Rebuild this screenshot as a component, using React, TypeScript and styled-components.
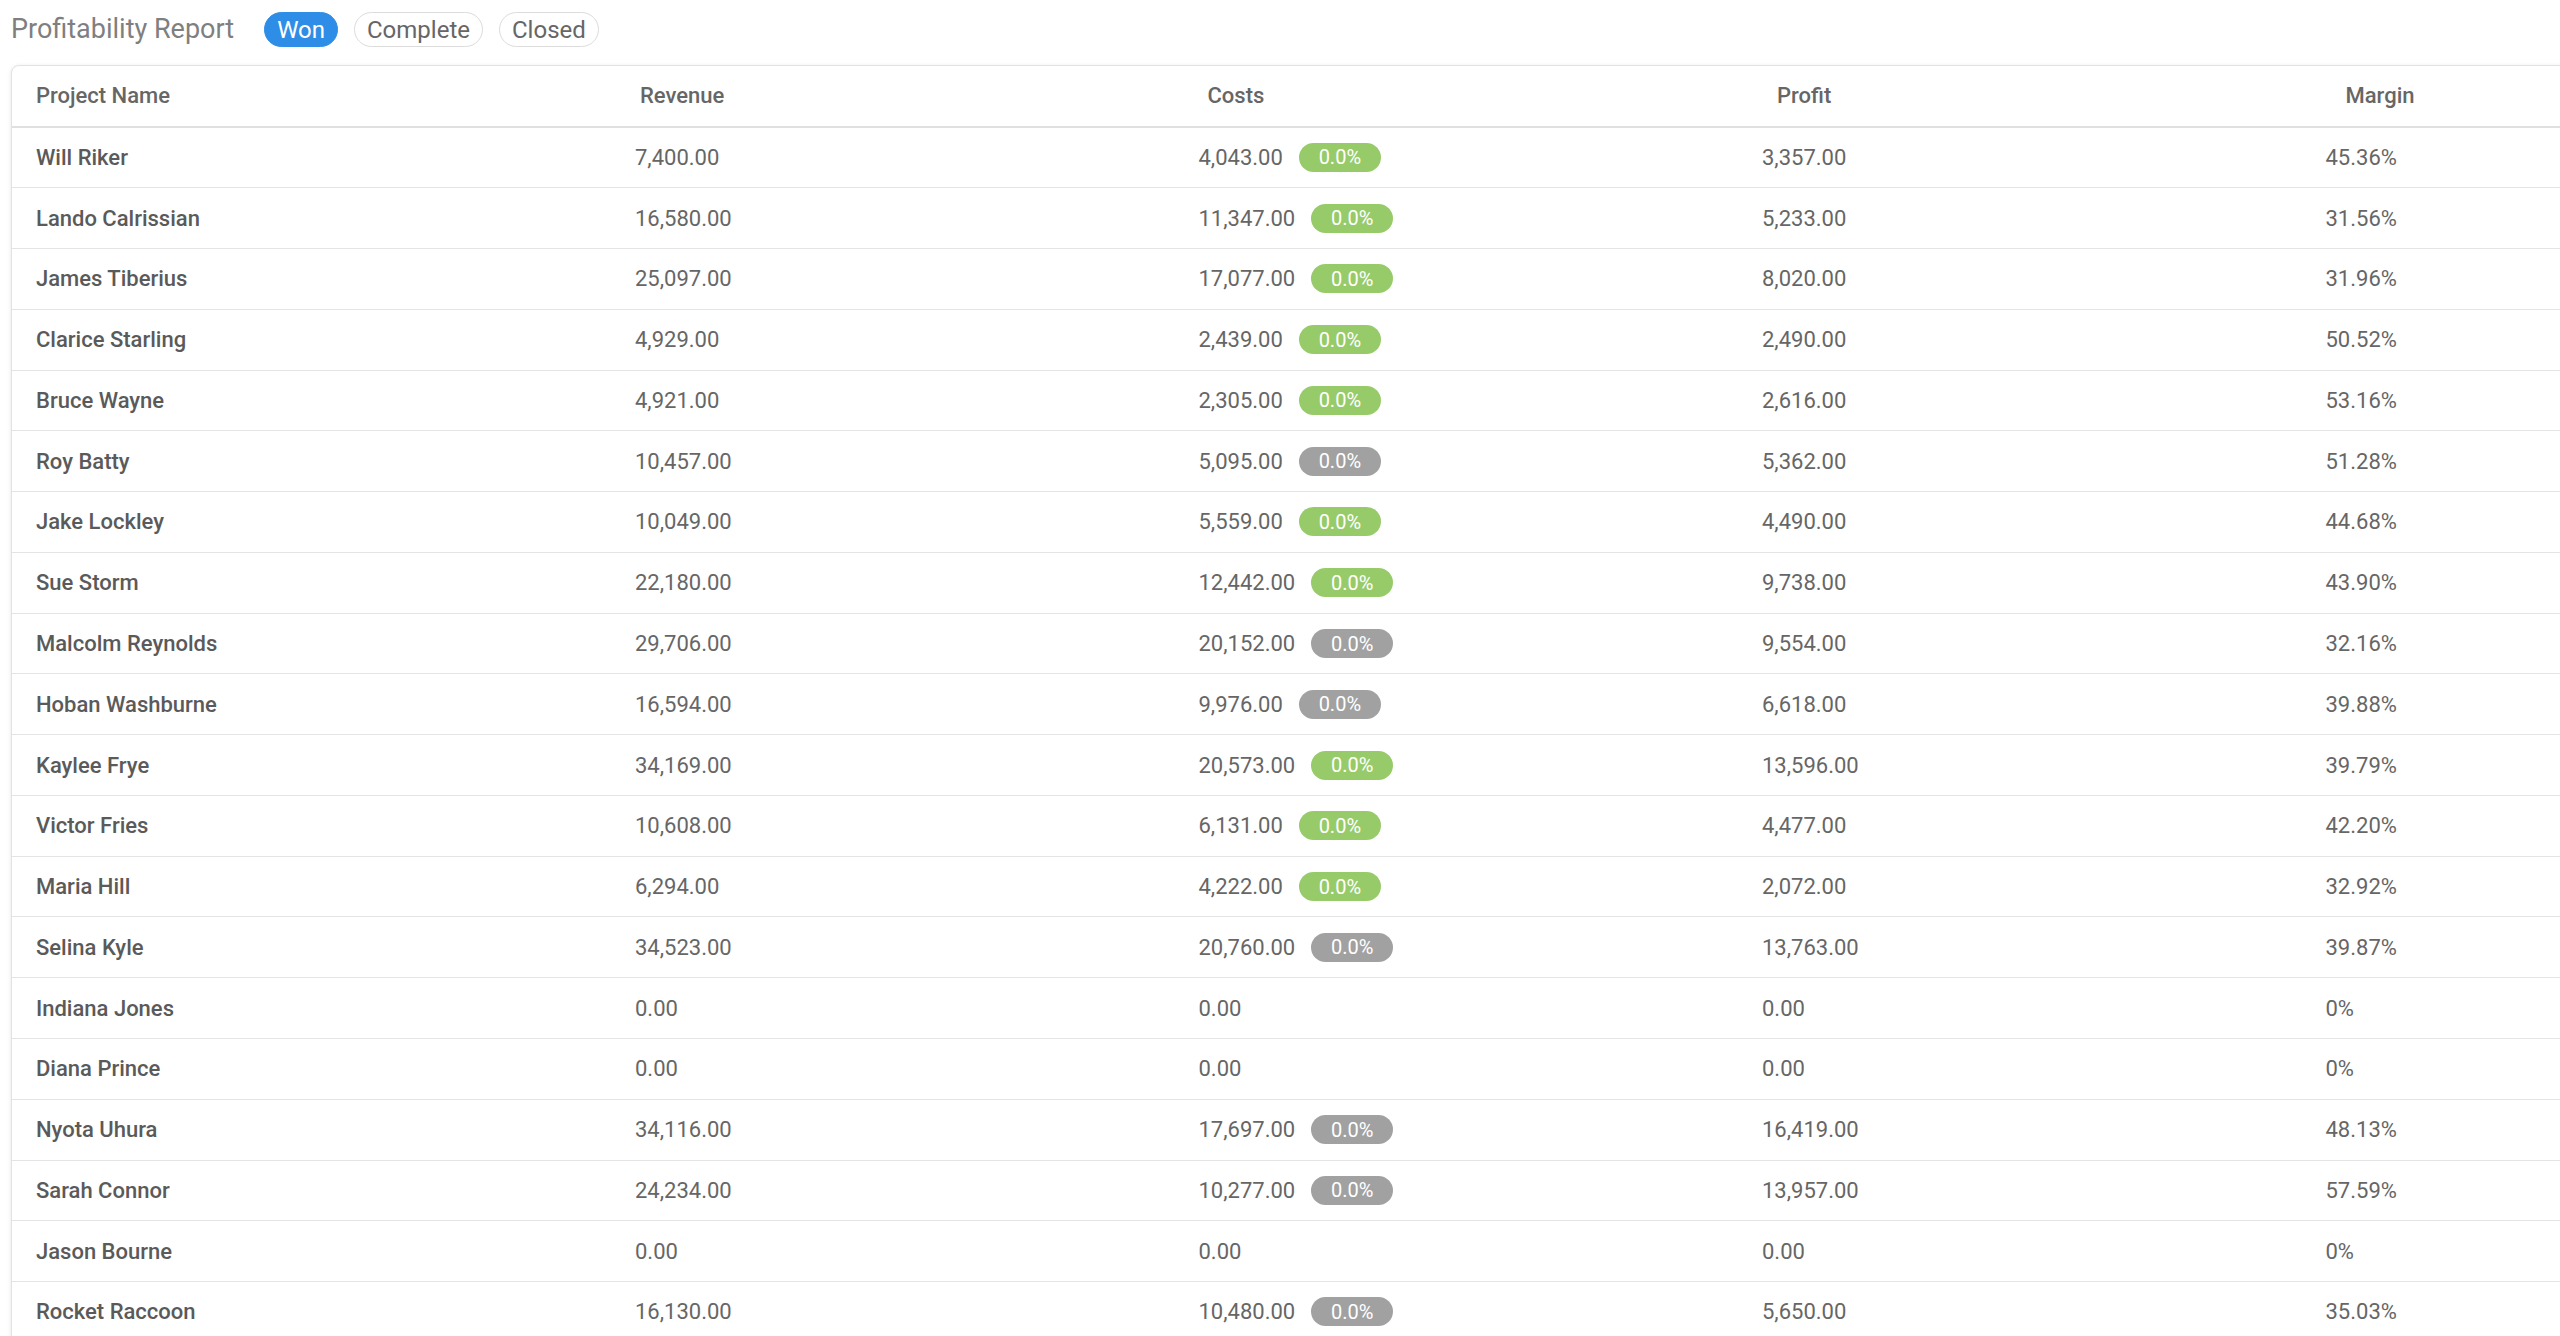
import styled, { createGlobalStyle } from 'styled-components';

type Row = {
  name: string;
  revenue: string;
  costs: string;
  status?: 'good' | 'idle';
  profit: string;
  margin: string;
};

const rows: Row[] = [
  { name: 'Will Riker', revenue: '7,400.00', costs: '4,043.00', status: 'good', profit: '3,357.00', margin: '45.36%' },
  { name: 'Lando Calrissian', revenue: '16,580.00', costs: '11,347.00', status: 'good', profit: '5,233.00', margin: '31.56%' },
  { name: 'James Tiberius', revenue: '25,097.00', costs: '17,077.00', status: 'good', profit: '8,020.00', margin: '31.96%' },
  { name: 'Clarice Starling', revenue: '4,929.00', costs: '2,439.00', status: 'good', profit: '2,490.00', margin: '50.52%' },
  { name: 'Bruce Wayne', revenue: '4,921.00', costs: '2,305.00', status: 'good', profit: '2,616.00', margin: '53.16%' },
  { name: 'Roy Batty', revenue: '10,457.00', costs: '5,095.00', status: 'idle', profit: '5,362.00', margin: '51.28%' },
  { name: 'Jake Lockley', revenue: '10,049.00', costs: '5,559.00', status: 'good', profit: '4,490.00', margin: '44.68%' },
  { name: 'Sue Storm', revenue: '22,180.00', costs: '12,442.00', status: 'good', profit: '9,738.00', margin: '43.90%' },
  { name: 'Malcolm Reynolds', revenue: '29,706.00', costs: '20,152.00', status: 'idle', profit: '9,554.00', margin: '32.16%' },
  { name: 'Hoban Washburne', revenue: '16,594.00', costs: '9,976.00', status: 'idle', profit: '6,618.00', margin: '39.88%' },
  { name: 'Kaylee Frye', revenue: '34,169.00', costs: '20,573.00', status: 'good', profit: '13,596.00', margin: '39.79%' },
  { name: 'Victor Fries', revenue: '10,608.00', costs: '6,131.00', status: 'good', profit: '4,477.00', margin: '42.20%' },
  { name: 'Maria Hill', revenue: '6,294.00', costs: '4,222.00', status: 'good', profit: '2,072.00', margin: '32.92%' },
  { name: 'Selina Kyle', revenue: '34,523.00', costs: '20,760.00', status: 'idle', profit: '13,763.00', margin: '39.87%' },
  { name: 'Indiana Jones', revenue: '0.00', costs: '0.00', profit: '0.00', margin: '0%' },
  { name: 'Diana Prince', revenue: '0.00', costs: '0.00', profit: '0.00', margin: '0%' },
  { name: 'Nyota Uhura', revenue: '34,116.00', costs: '17,697.00', status: 'idle', profit: '16,419.00', margin: '48.13%' },
  { name: 'Sarah Connor', revenue: '24,234.00', costs: '10,277.00', status: 'idle', profit: '13,957.00', margin: '57.59%' },
  { name: 'Jason Bourne', revenue: '0.00', costs: '0.00', profit: '0.00', margin: '0%' },
  { name: 'Rocket Raccoon', revenue: '16,130.00', costs: '10,480.00', status: 'idle', profit: '5,650.00', margin: '35.03%' },
];

const filters = ['Won', 'Complete', 'Closed'];

const App = () => {
  return (
    <Page>
      <GlobalStyle />
      <TitleBar>
        <Title>Profitability Report</Title>
        <Filters>
          {filters.map((f) => (
            <FilterPill key={f} $active={f === 'Won'}>{f}</FilterPill>
          ))}
        </Filters>
      </TitleBar>
      <Table>
        <HeaderRow>
          <HeadCell $indent={0}>Project Name</HeadCell>
          <HeadCell $indent={5}>Revenue</HeadCell>
          <HeadCell $indent={9}>Costs</HeadCell>
          <HeadCell $indent={15}>Profit</HeadCell>
          <HeadCell $indent={20}>Margin</HeadCell>
        </HeaderRow>
        {rows.map((r) => (
          <BodyRow key={r.name}>
            <NameCell>{r.name}</NameCell>
            <Cell>{r.revenue}</Cell>
            <Cell>
              {r.costs}
              {r.status && <Badge $status={r.status}>0.0%</Badge>}
            </Cell>
            <Cell>{r.profit}</Cell>
            <Cell>{r.margin}</Cell>
          </BodyRow>
        ))}
      </Table>
    </Page>
  );
};

const GlobalStyle = createGlobalStyle`
  html, body {
    margin: 0;
    padding: 0;
    background: #ffffff;
    overflow: hidden;
  }
  body {
    font-family: Roboto, "Liberation Sans", sans-serif;
  }
`;

const Page = styled.div`
  padding: 12px 0 0 11px;
  width: 2560px;
  height: 1336px;
  box-sizing: border-box;
  overflow: hidden;
`;

const TitleBar = styled.div`
  display: flex;
  align-items: center;
  gap: 30px;
  height: 35px;
`;

const Title = styled.h1`
  margin: 0;
  font-size: 27px;
  font-weight: 400;
  color: #7f7f7f;
  line-height: 1;
`;

const Filters = styled.div`
  display: flex;
  gap: 16px;
`;

const FilterPill = styled.button<{ $active?: boolean }>`
  height: 35px;
  padding: 0 12px;
  border-radius: 18px;
  font-family: Roboto, "Liberation Sans", sans-serif;
  font-size: 24px;
  line-height: 1;
  border: 1px solid ${(p) => (p.$active ? '#2e8de6' : '#dcdcdc')};
  background: ${(p) => (p.$active ? '#2e8de6' : '#ffffff')};
  color: ${(p) => (p.$active ? '#ffffff' : '#666666')};
  cursor: pointer;
`;

const Table = styled.div`
  margin-top: 18px;
  width: 2853px;
  border: 1px solid #e2e2e2;
  border-radius: 8px 0 0 0;
  box-shadow: 0 1px 4px rgba(0, 0, 0, 0.1);
  background: #fff;
`;

const columns = '599px repeat(4, 563.5px)';

const HeaderRow = styled.div`
  display: grid;
  grid-template-columns: ${columns};
  height: 61.5px;
  box-sizing: border-box;
  align-items: center;
  border-bottom: 2px solid #e0e0e0;
`;

const HeadCell = styled.div<{ $indent: number }>`
  padding-left: ${(p) => 24 + p.$indent}px;
  font-size: 22px;
  font-weight: 500;
  color: #666666;
`;

const BodyRow = styled.div`
  display: grid;
  grid-template-columns: ${columns};
  height: 60.77px;
  box-sizing: border-box;
  align-items: center;
  border-bottom: 1px solid #e4e4e4;
`;

const Cell = styled.div`
  display: flex;
  align-items: center;
  gap: 16px;
  padding-left: 24px;
  font-size: 22px;
  color: #666666;
`;

const NameCell = styled(Cell)`
  font-weight: 500;
  color: #5a5a5a;
`;

const Badge = styled.span<{ $status: 'good' | 'idle' }>`
  display: inline-flex;
  align-items: center;
  justify-content: center;
  height: 29px;
  width: 82px;
  border-radius: 15px;
  font-size: 20px;
  color: #ffffff;
  background: ${(p) => (p.$status === 'good' ? '#97cb69' : '#a1a1a1')};
`;

export default App;
